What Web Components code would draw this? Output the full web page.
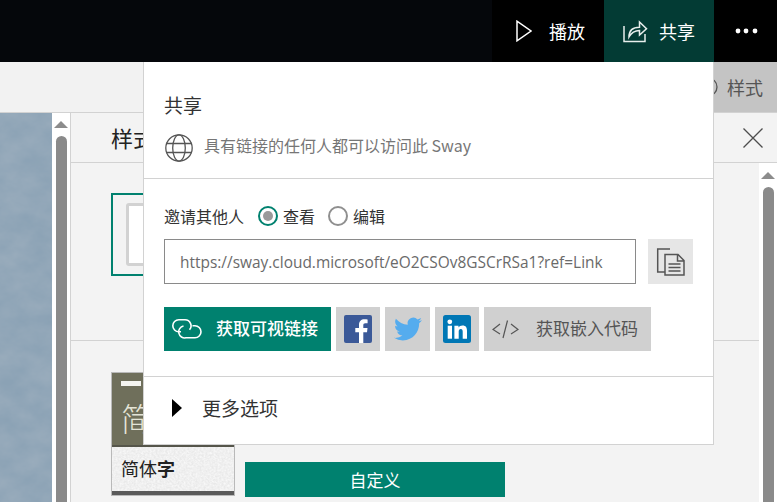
<!DOCTYPE html>
<html lang="zh-CN"><head><meta charset="utf-8"><title>Sway</title>
<style>
html,body{margin:0;padding:0;height:100%;overflow:hidden;background:#f3f3f3}
body{font-family:"Open Sans","Noto Sans CJK SC",sans-serif;}
</style></head>
<body>
<sway-app></sway-app>
<script>
const FONT='"Open Sans","Noto Sans CJK SC",sans-serif';
const CJK='"Noto Sans CJK SC","Open Sans",sans-serif';
function def(name,html){
  customElements.define(name,class extends HTMLElement{
    constructor(){super();this.attachShadow({mode:'open'}).innerHTML=html;}
  });
}
def('top-btn',`<style>
:host{display:flex;align-items:center;height:100%;box-sizing:border-box;color:#fff;font:18px ${CJK};background:#000;padding-bottom:1px}
:host([active]){background:#033b34}
.ic{display:flex}
</style><span class="ic"><slot name="icon"></slot></span><slot></slot>`);
def('top-bar',`<style>
:host{display:flex;height:62px;background:#05070b;flex:none}
.sp{flex:1}
top-btn{flex:none}
.play{width:112px;padding-left:24px;gap:17px}
.share{width:110px;padding-left:19px;gap:11px}
.more{width:63px;padding-left:21px}
</style>
<div class="sp"></div>
<top-btn class="play"><svg slot="icon" width="16" height="22" viewBox="0 0 16 22"><path d="M1 1.200V20.800L15 11Z" fill="none" stroke="#fff" stroke-width="1.500"/></svg>播放</top-btn>
<top-btn class="share" active><svg slot="icon" width="25" height="25" viewBox="0 0 25 25"><path d="M1 8V23.500H22V16" fill="none" stroke="#e8eeec" stroke-width="1.500"/><path d="M6 19C6 12 10 9.300 16.500 9.300V4L23.500 10.700L16.500 17V12.600C12 12.600 8.500 14.600 6 19Z" fill="none" stroke="#e8eeec" stroke-width="1.500"/></svg>共享</top-btn>
<top-btn class="more"><svg slot="icon" width="24" height="6" viewBox="0 0 24 6" fill="#fff"><circle cx="3" cy="3" r="2.400"/><circle cx="11" cy="3" r="2.400"/><circle cx="20" cy="3" r="2.400"/></svg></top-btn>`);
def('tool-bar',`<style>
:host{display:flex;justify-content:flex-end;height:50px;background:#f2f2f2;border-bottom:1px solid #d2d2d2;flex:none}
.st{display:flex;align-items:center;width:87px;box-sizing:border-box;padding-left:3px;gap:6px;background:#c4c4c4;color:#555;font:18px ${CJK}}
</style><div class="st"><svg width="28" height="22" viewBox="0 0 28 22" style="flex:none"><circle cx="15" cy="11" r="9" fill="none" stroke="#555" stroke-width="1.300"/></svg>样式</div>`);
def('scroll-track',`<style>
:host{display:flex;flex-direction:column;align-items:center;box-sizing:border-box;background:#fff;overflow:hidden}
.a{width:0;height:0;border:7px solid transparent;border-top:0;border-bottom:7px solid #8c8c8c;margin-top:8px;flex:none}
.t{width:11px;flex:1;margin-top:8px;background:#8a8a8a;border-radius:6px 6px 0 0}
</style><div class="a"></div><div class="t"></div>`);
def('stone-image',`<style>
:host{display:block;background:#7f9ab1;overflow:hidden}
svg{display:block;width:100%;height:100%}
</style><svg viewBox="0 0 52 389" preserveAspectRatio="none"><filter id="n" x="0" y="0" width="100%" height="100%"><feTurbulence type="fractalNoise" baseFrequency="0.035 0.05" numOctaves="4" seed="7"/><feColorMatrix values="0 0 0 0 0.38 0 0 0 0 0.46 0 0 0 0 0.54 0.8 0 0 0 -0.15"/></filter><rect width="52" height="389" fill="#8ba2b5"/><rect width="52" height="389" filter="url(#n)"/></svg>`);
def('swatch-a',`<style>
:host{display:block;box-sizing:border-box;width:124px;height:83px;border:2px solid #00816f;padding:8px 13px}
.i{height:100%;width:100%;box-sizing:border-box;background:#fff;border:3px solid #d2d2d2;border-radius:3px}
</style><div class="i"></div>`);
def('swatch-b',`<style>
:host{display:flex;flex-direction:column;box-sizing:border-box;width:124px;height:124px;border:1px solid #b9b9b9;flex:none}
.top{background:#6f6f5b;border-bottom:2px solid #55554a;padding:8px 0 0 9px;color:#e4e4d6;font:300 32px/1 ${CJK};display:flex;flex-direction:column;box-sizing:border-box;height:74px}
.bar{width:20px;height:5px;background:#f4f4f0;margin-bottom:15px;flex:none}
.bot{flex:1;display:flex;align-items:center;padding-left:9px;padding-bottom:2px;font:18px ${CJK};color:#222;background:#e9e9e9;position:relative;overflow:hidden}
.bot svg{position:absolute;left:0;top:0;width:100%;height:100%}
.bot span{position:relative}
.bot b{font-weight:700}
.strip{height:4px;background:#5a5a5a;flex:none}
</style><div class="top"><div class="bar"></div>简</div><div class="bot"><svg viewBox="0 0 122 46" preserveAspectRatio="none"><filter id="p" x="0" y="0" width="100%" height="100%"><feTurbulence type="fractalNoise" baseFrequency="0.5" numOctaves="3" seed="3"/><feColorMatrix values="0 0 0 0 1 0 0 0 0 1 0 0 0 0 1 1.200 0 0 0 -0.300"/></filter><rect width="122" height="46" filter="url(#p)"/></svg><span>简体<b>字</b></span></div><div class="strip"></div>`);
def('style-panel',`<style>
:host{display:flex;flex-direction:column;flex:1;min-width:0;background:#f3f3f3;overflow:hidden}
header{height:49px;border-bottom:1px solid #d2d2d2;display:flex;align-items:center;justify-content:space-between;padding:0 14px 0 40px;font:22px ${CJK};color:#222;flex:none}
header span{padding-bottom:2px}
.body{flex:1;display:flex;min-height:0}
.col{flex:1;min-width:0}
.s1{padding:30px 0 64px 40px;border-bottom:1px solid #d2d2d2}
.s2{padding:31px 0 0 40px;display:flex;align-items:flex-end;gap:10px}
.cust{width:260px;height:35px;background:#00816f;color:#fff;font:17px ${CJK};display:flex;align-items:center;justify-content:center;margin-bottom:-1px;padding-bottom:1px;box-sizing:border-box}
scroll-track{width:18px;flex:none;padding-top:1px}
</style>
<header><span>样式</span><svg width="20" height="20" viewBox="0 0 20 20"><path d="M.5.500 19.500 19.500M19.500.500.500 19.500" stroke="#4d4d4d" stroke-width="1.300" fill="none"/></svg></header>
<div class="body"><div class="col"><div class="s1"><swatch-a></swatch-a></div><div class="s2"><swatch-b></swatch-b><div class="cust">自定义</div></div></div><scroll-track></scroll-track></div>`);
def('radio-opt',`<style>
:host{display:inline-flex;align-items:center;gap:5px;font:16px ${CJK};color:#333}
.r{width:20px;height:20px;box-sizing:border-box;border-radius:50%;border:2px solid #8f8f8f;display:flex;align-items:center;justify-content:center;flex:none}
:host([checked]) .r{border-color:#00816f}
:host([checked]) .d{width:10px;height:10px;border-radius:50%;background:#9a9a9a}
</style><span class="r"><span class="d"></span></span><slot></slot>`);
def('icon-tile',`<style>
:host{display:flex;align-items:center;justify-content:center;height:44px;background:#d0d0d0;flex:none}
</style><slot></slot>`);
def('share-dialog',`<style>
:host{position:absolute;left:143px;top:62px;width:571px;height:383px;box-sizing:border-box;background:#fff;border-left:1px solid #d2d2d2;border-bottom:1px solid #d2d2d2;border-right:1px solid #d2d2d2;display:flex;flex-direction:column;color:#333;font-family:${CJK}}
.a{height:117px;box-sizing:border-box;padding:31px 20px 0;border-bottom:1px solid #d2d2d2;flex:none}
.h{font:19px/24px ${CJK};color:#333}
.line{display:flex;align-items:center;gap:11px;margin-top:17px;font-size:16px;color:#767676;height:28px}
.line svg{flex:none;margin-left:1px}
.line span{padding-bottom:7px}
.b{height:198px;box-sizing:border-box;padding:27px 20px 0;border-bottom:1px solid #d2d2d2;flex:none}
.inv{display:flex;align-items:center;height:20px;font-size:16px;color:#333}
.inv radio-opt:first-of-type{margin-left:14px}
.inv radio-opt+radio-opt{margin-left:13px}
.url{display:flex;gap:12px;margin-top:13px}
.field{width:472px;height:45px;box-sizing:border-box;border:1px solid #8a8a8a;padding-left:15px;display:flex;align-items:center;font:15.450px ${FONT};color:#6a6a6a;white-space:nowrap;overflow:hidden}
.copy{width:45px;height:45px;background:#e6e6e6;display:flex;align-items:center;justify-content:center}
.acts{display:flex;gap:5px;margin-top:23px}
.get{width:167px;height:44px;background:#00816f;color:#fff;display:flex;align-items:center;font-size:17px;font-weight:500;box-sizing:border-box;padding-left:8px;gap:14px;flex:none}
.emb{width:167px;padding-left:8px;box-sizing:border-box;gap:17px;color:#555;font-size:17px;display:flex;align-items:center;height:44px;background:#d0d0d0;flex:none}
.get span,.emb span{padding-bottom:4px}
.c{flex:1;display:flex;align-items:center;padding-left:28px;gap:20px;font-size:19px;color:#333;padding-bottom:6px}
</style>
<div class="a"><div class="h">共享</div><div class="line"><svg width="28" height="28" viewBox="0 0 28 28" fill="none" stroke="#555" stroke-width="1.300"><circle cx="14" cy="14" r="13.200"/><ellipse cx="14" cy="14" rx="6.300" ry="13.200"/><path d="M1.400 9.500H26.600M1.400 18.500H26.600"/></svg><span>具有链接的任何人都可以访问此 Sway</span></div></div>
<div class="b">
<div class="inv"><span>邀请其他人</span><radio-opt checked>查看</radio-opt><radio-opt>编辑</radio-opt></div>
<div class="url"><div class="field">https://sway.cloud.microsoft/eO2CSOv8GSCrRSa1?ref=Link</div><div class="copy"><svg width="29" height="28" viewBox="0 0 29 28" fill="none" stroke="#555" stroke-width="1.500"><path d="M9 24H1.700V1H14"/><path d="M9 6.500V27H28V12.500L22 6.500ZM21.500 6.500V13H28M12.500 16H24.500M12.500 19.500H24.500M12.500 23H24.500"/></svg></div></div>
<div class="acts">
<div class="get"><svg width="30" height="20" viewBox="0 0 30 20" fill="none" stroke="#fff" stroke-width="1.600"><path d="M9 12.800H6.800A6 6 0 0 1 6.800.800H13A6 6 0 0 1 17.500 10.800"/><path d="M11.500 7A6 6 0 0 0 14 18.800H23A6 6 0 0 0 23 6.800H20.500"/></svg><span>获取可视链接</span></div>
<icon-tile style="width:44px"><svg width="28" height="28" viewBox="0 0 28 28"><rect width="28" height="28" rx="2" fill="#3b5998"/><path d="M19.300 28V17.200H23L23.500 13H19.300V10.300C19.300 9.100 19.700 8.200 21.400 8.200H23.600V4.400C23.200 4.300 21.900 4.200 20.400 4.200 17.200 4.200 15 6.200 15 9.800V13H11.300V17.200H15V28Z" fill="#fff"/></svg></icon-tile>
<icon-tile style="width:45px"><svg width="28" height="28" viewBox="0 0 24 24"><path fill="#55acee" d="M23.953 4.57a10 10 0 01-2.825.775 4.958 4.958 0 002.163-2.723c-.951.555-2.005.959-3.127 1.184a4.92 4.92 0 00-8.384 4.482C7.69 8.095 4.067 6.13 1.64 3.162a4.822 4.822 0 00-.666 2.475c0 1.71.87 3.213 2.188 4.096a4.904 4.904 0 01-2.228-.616v.06a4.923 4.923 0 003.946 4.827 4.996 4.996 0 01-2.212.085 4.936 4.936 0 004.604 3.417 9.867 9.867 0 01-6.102 2.105c-.39 0-.779-.023-1.17-.067a13.995 13.995 0 007.557 2.209c9.053 0 13.998-7.496 13.998-13.985 0-.21 0-.42-.015-.63A9.935 9.935 0 0024 4.59z"/></svg></icon-tile>
<icon-tile style="width:44px"><svg width="28" height="28" viewBox="0 0 28 28"><rect width="28" height="28" rx="2.500" fill="#0077b5"/><g fill="#fff"><circle cx="6.800" cy="6.800" r="2.400"/><rect x="4.700" y="10.700" width="4.300" height="13"/><path d="M11.400 10.700H15.500V12.500C16.200 11.300 17.700 10.400 19.500 10.400 23 10.400 24 12.600 24 15.800V23.700H19.700V16.700C19.700 15.200 19.300 14 17.800 14 16.300 14 15.700 15.100 15.700 16.700V23.700H11.400Z"/></g></svg></icon-tile>
<div class="emb"><svg width="27" height="20" viewBox="0 0 27 20" fill="none" stroke="#555" stroke-width="1.200"><path d="M8 5 1 10.500 8 15M19 5 26 10.500 19 15M15.500 1.500 11 19"/></svg><span>获取嵌入代码</span></div>
</div></div>
<div class="c"><svg width="10" height="18" viewBox="0 0 10 18"><path d="M0 0 10 9 0 18Z" fill="#000"/></svg><span>更多选项</span></div>`);
def('sway-app',`<style>
:host{display:flex;flex-direction:column;position:relative;width:777px;height:502px;overflow:hidden}
.main{flex:1;display:flex;min-height:0}
stone-image{width:52px;flex:none}
scroll-track{width:19px;flex:none;border-right:1px solid #d2d2d2}
</style>
<top-bar></top-bar><tool-bar></tool-bar>
<div class="main"><stone-image></stone-image><scroll-track></scroll-track><style-panel></style-panel></div>
<share-dialog></share-dialog>`);
</script>
</body></html>
